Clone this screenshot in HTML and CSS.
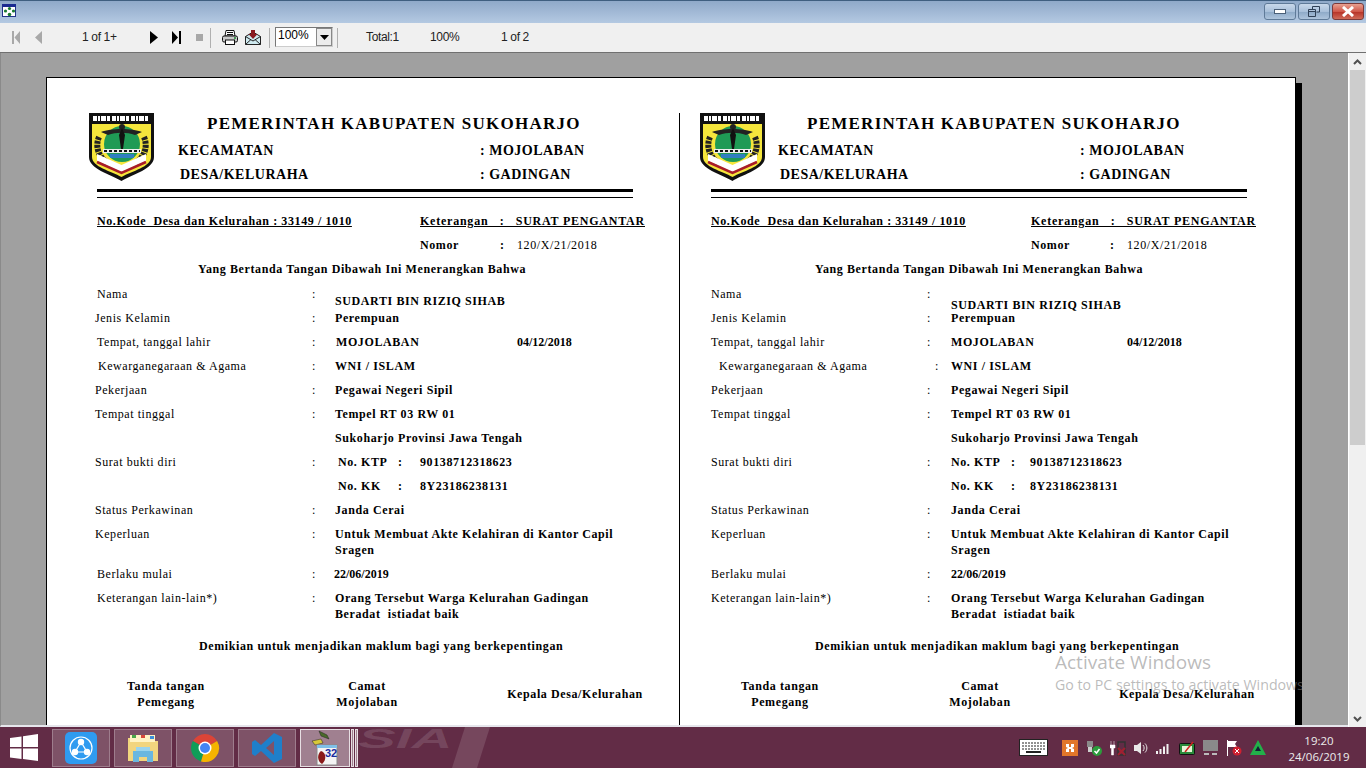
FILE: index.html
```html
<!DOCTYPE html>
<html lang="en">
<head>
    <meta charset="UTF-8">
    <meta name="viewport" content="width=device-width, initial-scale=1.0">
    <title>Surat Pengantar</title>
    <link rel="stylesheet" href="styles.css">
</head>
<body>
    <svg class="defs" width="0" height="0">
        <symbol id="crest" viewBox="0 0 65 68">
            <path d="M0 0H65V44C65 56 44 61 32.5 68C21 61 0 56 0 44Z" fill="#111"/>
            <path d="M3 11H62V44C62 54 43 58 32.5 64C22 58 3 54 3 44Z" fill="#f5e63c"/>
            <path d="M4 5.5H61" stroke="#fff" stroke-width="5" stroke-dasharray="4 1 2 1 5 1 3 2"/>
            <circle cx="33" cy="31" r="18" fill="#1f9a55"/>
            <path d="M10 24C6 33 9 44 19 50M55 24C59 33 56 44 46 50" fill="none" stroke="#222" stroke-width="6" stroke-dasharray="3 1"/>
            <path d="M12 19C22 15 43 15 53 19L46 22C38 19 27 19 19 22Z" fill="#222"/>
            <circle cx="33" cy="14" r="3" fill="#222"/>
            <path d="M33 15L36 22L34 36H32L30 22Z" fill="#111"/>
            <path d="M14 40V36H52V40Z" fill="#eee"/>
            <path d="M15 38H51" stroke="#111" stroke-width="2" stroke-dasharray="3 2"/>
            <path d="M21 41H45V45H21Z" fill="#2f7fc0"/>
            <path d="M8 41L32.5 52L57 41V48L32.5 59L8 48Z" fill="#fff"/>
            <path d="M8 49L32.5 60L57 49" fill="none" stroke="#a81c28" stroke-width="2.5"/>
        </symbol>
    </svg>

    <div class="window">
        <div class="title-bar">
            <svg class="app-icon" width="15" height="15" viewBox="0 0 15 15">
                <rect x="0.5" y="1.5" width="13" height="12" fill="#fff" stroke="#223388"/>
                <rect x="0" y="1" width="14" height="3" fill="#1a2a90"/>
                <circle cx="3.5" cy="8" r="1.6" fill="#1a7a30"/>
                <circle cx="7.5" cy="5.5" r="1.6" fill="#1a7a30"/>
                <circle cx="11.5" cy="8" r="1.6" fill="#1a7a30"/>
                <circle cx="7.5" cy="11.5" r="1.8" fill="#1a7a30"/>
            </svg>
            <div class="win-buttons">
                <div class="win-btn">
                    <svg width="12" height="6" viewBox="0 0 12 6"><rect x="0.5" y="0.5" width="11" height="4" fill="#fff" stroke="#4a5f78"/></svg>
                </div>
                <div class="win-btn">
                    <svg width="12" height="11" viewBox="0 0 12 11"><path d="M4.5 3V0.5H11.5V6H8.5M0.5 3.5H7.5V10.5H0.5ZM0.5 5.5H7.5" fill="none" stroke="#2f4056"/></svg>
                </div>
                <div class="win-btn win-close">
                    <svg width="14" height="11" viewBox="0 0 14 11"><path d="M2 1L12 10M12 1L2 10" stroke="#fff" stroke-width="3"/></svg>
                </div>
            </div>
        </div>

        <div class="toolbar">
            <svg class="tool tool-first" width="8" height="13" viewBox="0 0 8 13"><path d="M0 0H2V13H0ZM8 0V13L2.5 6.5Z" fill="#a8a8a8"/></svg>
            <svg class="tool tool-prev" width="7" height="13" viewBox="0 0 7 13"><path d="M7 0V13L0 6.5Z" fill="#a8a8a8"/></svg>
            <span class="tool-text page-count">1 of 1+</span>
            <svg class="tool tool-next" width="8" height="13" viewBox="0 0 8 13"><path d="M0 0V13L8 6.5Z" fill="#000"/></svg>
            <svg class="tool tool-last" width="9" height="13" viewBox="0 0 9 13"><path d="M0 0V13L6 6.5ZM7 0H9V13H7Z" fill="#000"/></svg>
            <svg class="tool tool-stop" width="7" height="7" viewBox="0 0 7 7"><rect width="7" height="7" fill="#a8a8a8"/></svg>
            <span class="tool-sep sep-one"></span>
            <svg class="tool tool-print" width="16" height="15" viewBox="0 0 16 15">
                <path d="M4 .5H12L13 6H3Z" fill="#fff" stroke="#111"/>
                <path d="M5 2.5H11M5 4.5H11" stroke="#111"/>
                <rect x="0.5" y="6" width="15" height="6" rx="1.5" fill="#c9c9c9" stroke="#111"/>
                <rect x="3.5" y="10" width="9" height="4.5" fill="#fff" stroke="#111"/>
                <circle cx="13" cy="8" r="1" fill="#1a8a30"/>
            </svg>
            <svg class="tool tool-mail" width="16" height="15" viewBox="0 0 16 15">
                <path d="M0.5 6.5L8 2L15.5 6.5V14.5H0.5Z" fill="#cfeaf0" stroke="#222"/>
                <path d="M0.5 6.5L8 11L15.5 6.5M0.5 14.5L6 9.5M15.5 14.5L10 9.5" fill="none" stroke="#222"/>
                <path d="M6 0H10V4H12.5L8 9L3.5 4H6Z" fill="#8a1a20"/>
            </svg>
            <span class="tool-sep sep-two"></span>
            <div class="zoom-box">
                <span class="zoom-value">100%</span>
                <span class="zoom-arrow"><svg width="9" height="5" viewBox="0 0 9 5"><path d="M0 0H9L4.5 5Z" fill="#000"/></svg></span>
            </div>
            <span class="tool-sep sep-three"></span>
            <span class="tool-text total">Total:1</span>
            <span class="tool-text percent">100%</span>
            <span class="tool-text pages">1 of 2</span>
        </div>

        <div class="viewer">
            <div class="canvas">
                <div class="page">
                    <section class="slip slip-left">
                        <header class="head">
                            <svg class="crest" width="65" height="68"><use href="#crest"/></svg>
                            <div class="head-text">
                                <div class="head-title">PEMERINTAH KABUPATEN SUKOHARJO</div>
                                <div class="head-line"><span class="head-key">KECAMATAN</span><span>: MOJOLABAN</span></div>
                                <div class="head-line head-line-two"><span class="head-key">DESA/KELURAHA</span><span>: GADINGAN</span></div>
                            </div>
                        </header>
                        <div class="rule-thick"></div>
                        <div class="rule-thin"></div>

                        <div class="ref-row">
                            <span class="ref-code">No.Kode&nbsp; Desa dan Kelurahan : 33149 / 1010</span>
                            <span class="ref-note">Keterangan &nbsp; : &nbsp; SURAT PENGANTAR</span>
                        </div>
                        <div class="number-row">
                            <span class="number-key">Nomor</span><span class="number-colon">:</span><span class="number-value">120/X/21/2018</span>
                        </div>
                        <div class="lead">Yang Bertanda Tangan Dibawah Ini Menerangkan Bahwa</div>

                        <div class="fields">
                            <div class="row"><span class="lab lab-in">Nama</span><span class="colon">:</span><span class="val val-low">SUDARTI BIN RIZIQ SIHAB</span></div>
                            <div class="row"><span class="lab">Jenis Kelamin</span><span class="colon">:</span><span class="val">Perempuan</span></div>
                            <div class="row"><span class="lab lab-in">Tempat, tanggal lahir</span><span class="colon">:</span><span class="val val-in"><span class="birth-place">MOJOLABAN</span><span class="date">04/12/2018</span></span></div>
                            <div class="row"><span class="lab lab-far">Kewarganegaraan &amp; Agama</span><span class="colon">:</span><span class="val">WNI / ISLAM</span></div>
                            <div class="row"><span class="lab">Pekerjaan</span><span class="colon">:</span><span class="val">Pegawai Negeri Sipil</span></div>
                            <div class="row"><span class="lab">Tempat tinggal</span><span class="colon">:</span><span class="val">Tempel RT 03 RW 01</span></div>
                            <div class="row"><span class="lab"></span><span class="colon"></span><span class="val">Sukoharjo Provinsi Jawa Tengah</span></div>
                            <div class="row"><span class="lab">Surat bukti diri</span><span class="colon">:</span><span class="val val-id"><span class="id-key">No. KTP</span><span class="id-colon">:</span><span>90138712318623</span></span></div>
                            <div class="row"><span class="lab"></span><span class="colon"></span><span class="val val-id"><span class="id-key">No. KK</span><span class="id-colon">:</span><span>8Y23186238131</span></span></div>
                            <div class="row"><span class="lab">Status Perkawinan</span><span class="colon">:</span><span class="val">Janda Cerai</span></div>
                            <div class="row row-tall"><span class="lab">Keperluan</span><span class="colon">:</span><span class="val">Untuk Membuat Akte Kelahiran di Kantor Capil Sragen</span></div>
                            <div class="row"><span class="lab lab-in">Berlaku mulai</span><span class="colon">:</span><span class="val val-out date">22/06/2019</span></div>
                            <div class="row row-tall"><span class="lab lab-in">Keterangan lain-lain*)</span><span class="colon">:</span><span class="val">Orang Tersebut Warga Kelurahan Gadingan<br>Beradat&nbsp; istiadat baik</span></div>
                        </div>

                        <div class="closing">Demikian untuk menjadikan maklum bagi yang berkepentingan</div>
                        <div class="signs">
                            <div>Tanda tangan<br>Pemegang</div>
                            <div>Camat<br>Mojolaban</div>
                            <div class="sign-head">Kepala Desa/Kelurahan</div>
                        </div>
                    </section>

                    <section class="slip slip-right">
                        <header class="head">
                            <svg class="crest" width="65" height="68"><use href="#crest"/></svg>
                            <div class="head-text">
                                <div class="head-title">PEMERINTAH KABUPATEN SUKOHARJO</div>
                                <div class="head-line"><span class="head-key">KECAMATAN</span><span>: MOJOLABAN</span></div>
                                <div class="head-line head-line-two"><span class="head-key">DESA/KELURAHA</span><span>: GADINGAN</span></div>
                            </div>
                        </header>
                        <div class="rule-thick"></div>
                        <div class="rule-thin"></div>

                        <div class="ref-row">
                            <span class="ref-code">No.Kode&nbsp; Desa dan Kelurahan : 33149 / 1010</span>
                            <span class="ref-note">Keterangan &nbsp; : &nbsp; SURAT PENGANTAR</span>
                        </div>
                        <div class="number-row">
                            <span class="number-key">Nomor</span><span class="number-colon">:</span><span class="number-value">120/X/21/2018</span>
                        </div>
                        <div class="lead">Yang Bertanda Tangan Dibawah Ini Menerangkan Bahwa</div>

                        <div class="fields">
                            <div class="row"><span class="lab">Nama</span><span class="colon">:</span><span class="val val-low">SUDARTI BIN RIZIQ SIHAB</span></div>
                            <div class="row"><span class="lab">Jenis Kelamin</span><span class="colon">:</span><span class="val">Perempuan</span></div>
                            <div class="row"><span class="lab">Tempat, tanggal lahir</span><span class="colon">:</span><span class="val"><span class="birth-place">MOJOLABAN</span><span class="date">04/12/2018</span></span></div>
                            <div class="row"><span class="lab lab-far">Kewarganegaraan &amp; Agama</span><span class="colon colon-far">:</span><span class="val">WNI / ISLAM</span></div>
                            <div class="row"><span class="lab">Pekerjaan</span><span class="colon">:</span><span class="val">Pegawai Negeri Sipil</span></div>
                            <div class="row"><span class="lab">Tempat tinggal</span><span class="colon">:</span><span class="val">Tempel RT 03 RW 01</span></div>
                            <div class="row"><span class="lab"></span><span class="colon"></span><span class="val">Sukoharjo Provinsi Jawa Tengah</span></div>
                            <div class="row"><span class="lab">Surat bukti diri</span><span class="colon">:</span><span class="val val-id"><span class="id-key">No. KTP</span><span class="id-colon">:</span><span>90138712318623</span></span></div>
                            <div class="row"><span class="lab"></span><span class="colon"></span><span class="val val-id"><span class="id-key">No. KK</span><span class="id-colon">:</span><span>8Y23186238131</span></span></div>
                            <div class="row"><span class="lab">Status Perkawinan</span><span class="colon">:</span><span class="val">Janda Cerai</span></div>
                            <div class="row row-tall"><span class="lab">Keperluan</span><span class="colon">:</span><span class="val">Untuk Membuat Akte Kelahiran di Kantor Capil Sragen</span></div>
                            <div class="row"><span class="lab">Berlaku mulai</span><span class="colon">:</span><span class="val date">22/06/2019</span></div>
                            <div class="row row-tall"><span class="lab">Keterangan lain-lain*)</span><span class="colon">:</span><span class="val">Orang Tersebut Warga Kelurahan Gadingan<br>Beradat&nbsp; istiadat baik</span></div>
                        </div>

                        <div class="closing">Demikian untuk menjadikan maklum bagi yang berkepentingan</div>
                        <div class="signs">
                            <div>Tanda tangan<br>Pemegang</div>
                            <div>Camat<br>Mojolaban</div>
                            <div class="sign-head">Kepala Desa/Kelurahan</div>
                        </div>
                    </section>
                </div>
                <div class="watermark">
                    <div class="watermark-title">Activate Windows</div>
                    <div class="watermark-text">Go to PC settings to activate Windows.</div>
                </div>
            </div>
            <div class="scrollbar">
                <span class="scroll-btn"><svg width="9" height="6" viewBox="0 0 9 6"><path d="M1 5L4.5 1.5L8 5" fill="none" stroke="#505050" stroke-width="2"/></svg></span>
                <span class="scroll-thumb"></span>
                <span class="scroll-rest"></span>
                <span class="scroll-btn"><svg width="9" height="6" viewBox="0 0 9 6"><path d="M1 1L4.5 4.5L8 1" fill="none" stroke="#505050" stroke-width="2"/></svg></span>
            </div>
        </div>

        <footer class="taskbar">
            <svg class="wallpaper" width="150" height="41" viewBox="0 0 150 41">
                <text transform="translate(6 21) scale(2.1 1)" class="wallpaper-text">SIA</text>
                <path d="M113 0H138L125 41H100Z" fill="#fff" opacity="0.13"/>
            </svg>
            <svg class="start" width="28" height="27" viewBox="0 0 28 27">
                <path d="M0 4L11.5 2.4V13H0ZM13 2.2L28 0V13H13ZM0 14.5H11.5V25L0 23.5ZM13 14.5H28V27L13 25Z" fill="#fff"/>
            </svg>
            <div class="task-btn">
                <svg width="32" height="32" viewBox="0 0 32 32">
                    <rect width="32" height="32" rx="5" fill="#2f9bf0"/>
                    <circle cx="16" cy="16" r="11" fill="none" stroke="#fff" stroke-width="1.2"/>
                    <circle cx="16" cy="10" r="3.2" fill="#fff"/>
                    <circle cx="10" cy="20" r="3.2" fill="#fff"/>
                    <circle cx="22" cy="20" r="3.2" fill="#fff"/>
                    <path d="M16 10L10 20H22Z" fill="none" stroke="#fff" stroke-width="1.2"/>
                </svg>
            </div>
            <div class="task-btn">
                <svg width="32" height="30" viewBox="0 0 32 30">
                    <path d="M1 5H12L14 8H31V28H1Z" fill="#f2d57e"/>
                    <path d="M3 2H28V9H3Z" fill="#fff3c4"/>
                    <path d="M5 2H9V5H5Z" fill="#4aa84a"/>
                    <path d="M14 2H18V5H14Z" fill="#d9483b"/>
                    <path d="M23 3H27V6H23Z" fill="#3c8fd9"/>
                    <path d="M6 18H26V29H20V24H12V29H6Z" fill="#6ab7e0"/>
                    <path d="M9 14H23V18H9Z" fill="#9ad4ee"/>
                </svg>
            </div>
            <div class="task-btn">
                <svg width="30" height="30" viewBox="0 0 30 30">
                    <path d="M15 15L2.9 8A14 14 0 0 1 27.1 8Z" fill="#db4437"/>
                    <path d="M15 15L2.9 8A14 14 0 0 0 11 28.4Z" fill="#0f9d58"/>
                    <path d="M15 15L27.1 8A14 14 0 0 1 11 28.4Z" fill="#f4b400"/>
                    <circle cx="15" cy="15" r="6.5" fill="#fff"/>
                    <circle cx="15" cy="15" r="5" fill="#4285f4"/>
                </svg>
            </div>
            <div class="task-btn">
                <svg width="32" height="32" viewBox="0 0 32 32">
                    <path d="M23 1L31 5V27L23 31L10 19L4 24L1 22V10L4 8L10 13ZM23 9L15 16L23 23Z" fill="#1f7fca"/>
                </svg>
            </div>
            <div class="task-btn task-active">
                <svg width="30" height="36" viewBox="0 0 30 36">
                    <path d="M9 1L17 5L19 9L11 6Z" fill="#4a6a2a" stroke="#222" stroke-width="0.5"/>
                    <path d="M2 11L11 9L13 13L5 15Z" fill="#d8c838" stroke="#222" stroke-width="0.5"/>
                    <rect x="7" y="15" width="20" height="20" fill="#f4f4f4" stroke="#888"/>
                    <rect x="7" y="15" width="20" height="3" fill="#7fc0e8"/>
                    <path d="M11 21C16 22 17 30 12 34C7 31 7 24 11 21Z" fill="#8a1a1a"/>
                    <text x="15" y="27" class="app-number">32</text>
                </svg>
            </div>
            <span class="task-stack"></span>
            <span class="task-stack task-stack-b"></span>

            <div class="tray">
                <svg class="tray-key" width="29" height="17" viewBox="0 0 29 17">
                    <rect x="0.5" y="0.5" width="28" height="16" fill="#fff" stroke="#222"/>
                    <path d="M3 4H26M3 7H26M3 10H26" stroke="#222" stroke-dasharray="2 1"/>
                    <path d="M7 13H22" stroke="#222" stroke-width="2"/>
                </svg>
                <svg class="tray-icon tray-xampp" width="16" height="16" viewBox="0 0 16 16">
                    <rect width="16" height="16" fill="#e2762a"/>
                    <path d="M4 4H7V7H9V4H12V7L10 8L12 9V12H9V9H7V12H4V9L6 8L4 7Z" fill="#fff"/>
                </svg>
                <svg class="tray-icon" width="16" height="16" viewBox="0 0 16 16">
                    <rect x="1" y="1" width="6" height="6" fill="#8a8a8a"/>
                    <rect x="2" y="7" width="4" height="5" fill="#cfcfcf"/>
                    <circle cx="11" cy="11" r="5" fill="#2c9c3c"/>
                    <path d="M8.5 11L10.5 13L13.5 9" fill="none" stroke="#fff" stroke-width="1.5"/>
                </svg>
                <svg class="tray-icon" width="16" height="16" viewBox="0 0 16 16">
                    <path d="M1 1V5M4 1V5M0 5H5V8H3.5V15H1.5V8H0Z" fill="#fff" stroke="#fff" stroke-width="0.5"/>
                    <rect x="8" y="2" width="7" height="13" fill="none" stroke="#333" stroke-width="1.5"/>
                    <path d="M8 8L15 15M15 8L8 15" stroke="#a02030" stroke-width="2"/>
                </svg>
                <svg class="tray-icon" width="14" height="14" viewBox="0 0 14 14">
                    <path d="M0 4H3L7 1V13L3 10H0Z" fill="#e8e8e8"/>
                    <path d="M9 4C10.5 6 10.5 8 9 10M11 2.5C13.5 5 13.5 9 11 11.5" fill="none" stroke="#e8e8e8"/>
                </svg>
                <svg class="tray-icon" width="15" height="13" viewBox="0 0 15 13">
                    <path d="M0 10H2V13H0ZM3.5 8H5.5V13H3.5ZM7 5.5H9V13H7ZM10.5 3H12.5V13H10.5Z" fill="#f0f0f0"/>
                </svg>
                <svg class="tray-icon" width="16" height="14" viewBox="0 0 16 14">
                    <rect x="0.5" y="2.5" width="15" height="11" rx="1" fill="#2a8a3a" stroke="#111"/>
                    <rect x="3" y="5" width="10" height="6" fill="#e8f4d8"/>
                    <path d="M6 11L14 1" stroke="#d02020" stroke-width="1.5"/>
                </svg>
                <svg class="tray-icon" width="15" height="16" viewBox="0 0 15 16">
                    <rect x="0" y="0" width="15" height="11" fill="#8a8a8a"/>
                    <rect x="1" y="13" width="5" height="2" fill="#bbb"/>
                    <rect x="9" y="13" width="5" height="2" fill="#bbb"/>
                </svg>
                <svg class="tray-icon" width="16" height="16" viewBox="0 0 16 16">
                    <path d="M1 0H2V16H1ZM2 1H11L9 4L11 7H2Z" fill="#fff"/>
                    <circle cx="11" cy="11" r="4.5" fill="#d02030"/>
                    <path d="M9 9L13 13M13 9L9 13" stroke="#fff"/>
                </svg>
                <svg class="tray-icon" width="16" height="15" viewBox="0 0 16 15">
                    <path d="M8 0L16 15H0Z" fill="#22b04a"/>
                    <path d="M8 6L11 11H5Z" fill="#123"/>
                </svg>
                <div class="clock">
                    <div>19:20</div>
                    <div>24/06/2019</div>
                </div>
            </div>
        </footer>
    </div>
</body>
</html>
```

FILE: styles.css
```css
* {
    box-sizing: border-box;
}

html,
body {
    margin: 0;
    height: 100%;
    overflow: hidden;
}

body {
    font-family: "Liberation Sans", Arial, sans-serif;
    font-size: 12px;
    color: #000;
}

.defs {
    position: absolute;
}

.window {
    display: flex;
    flex-direction: column;
    height: 768px;
}

/* title bar */
.title-bar {
    height: 23px;
    flex: none;
    display: flex;
    align-items: flex-start;
    justify-content: space-between;
    padding: 3px 2px 0 2px;
    border-top: 1px solid #3f5f80;
    background: linear-gradient(180deg, #8fa9c9, #b4c9e2);
}

.app-icon {
    margin-top: -1px;
}

.win-buttons {
    display: flex;
    gap: 2px;
    margin-top: -1px;
}

.win-btn {
    width: 32px;
    height: 17px;
    display: flex;
    align-items: center;
    justify-content: center;
    border: 1px solid #5f7a98;
    border-radius: 3px;
    background: linear-gradient(180deg, #c8d8ea 0%, #a9c0da 50%, #8fabc9 55%, #aec4dc 100%);
}

.win-close {
    border-color: #7a3a3a;
    background: linear-gradient(180deg, #e8a090 0%, #d0584a 50%, #b8352a 55%, #cf6a58 100%);
}

/* toolbar */
.toolbar {
    height: 29px;
    flex: none;
    display: flex;
    align-items: center;
    background: #f0f0f0;
}

.tool {
    flex: none;
}

.tool-first { margin-left: 12px; }
.tool-prev { margin-left: 15px; }
.tool-next { margin-left: 0; }
.tool-last { margin-left: 14px; }
.tool-stop { margin-left: 15px; }
.tool-print { margin-left: 11px; }
.tool-mail { margin-left: 7px; }

.tool-text {
    flex: none;
    color: #222;
    letter-spacing: -0.35px;
    margin-top: -1px;
}

.page-count {
    width: 68px;
    margin-left: 40px;
}

.tool-sep {
    flex: none;
    width: 1px;
    height: 20px;
    background: #b0b0b0;
}

.sep-one { margin-left: 7px; }
.sep-two { margin-left: 8px; }
.sep-three { margin-left: 4px; }

.zoom-box {
    width: 58px;
    height: 20px;
    margin-left: 5px;
    margin-top: -1px;
    display: flex;
    justify-content: space-between;
    border: 1px solid #777;
    border-right-color: #ccc;
    border-bottom-color: #ccc;
    background: #fff;
}

.zoom-value {
    padding-left: 2px;
    line-height: 15px;
}

.zoom-arrow {
    width: 16px;
    display: flex;
    align-items: center;
    justify-content: center;
    border: 1px solid #888;
    background: #ececec;
}

.total { margin-left: 28px; width: 64px; }
.percent { width: 71px; }

/* viewer */
.viewer {
    flex: 1;
    min-height: 0;
    display: flex;
    border-top: 1px solid #707070;
    background: #a0a0a0;
}

.canvas {
    flex: 1;
    position: relative;
    overflow: hidden;
    padding: 24px 0 0 45px;
    border-left: 1px solid #8a8a8a;
    border-bottom: 2px solid #e6e6ec;
}

.page {
    width: 1250px;
    height: 900px;
    display: flex;
    padding-top: 35px;
    border: 1px solid #000;
    background: #fff;
    box-shadow: 6px 6px 0 #000;
    font-family: "Liberation Serif", "Times New Roman", serif;
    font-size: 12px;
    line-height: 16px;
    font-weight: bold;
    letter-spacing: 0.6px;
}

.slip {
    flex: none;
}

.slip-left {
    width: 633px;
    padding-left: 50px;
    border-right: 1px solid #000;
    --crest-shift: -8px;
    --head-gap: 24px;
    --row-shift: -2px;
    --col-lab: 217px;
    --col-colon: 23px;
    --ref-width: 323px;
    --num-key: 80px;
    --lead-x: 101px;
    --closing-x: 102px;
    --birth: 181px;
    --id-key: 60px;
    --id-colon: 22px;
    --id-shift: 3px;
    --far: 3px;
    --low: 7px;
    --signs: 138px 264px 152px;
}

.slip-right {
    width: 615px;
    padding-left: 31px;
    --crest-shift: -11px;
    --head-gap: 13px;
    --row-shift: 0px;
    --col-lab: 216px;
    --col-colon: 24px;
    --ref-width: 320px;
    --num-key: 79px;
    --lead-x: 104px;
    --closing-x: 104px;
    --birth: 176px;
    --id-key: 60px;
    --id-colon: 19px;
    --id-shift: 0px;
    --far: 8px;
    --low: 11px;
    --signs: 138px 262px 152px;
}

/* letterhead */
.head {
    display: flex;
    height: 76px;
    margin-left: var(--crest-shift);
}

.crest {
    flex: none;
    margin-right: var(--head-gap);
}

.head-title {
    margin: 1px 0 0 29px;
    font-size: 17px;
    line-height: 20px;
    letter-spacing: 1.25px;
    white-space: nowrap;
}

.head-line {
    display: flex;
    margin-top: 8px;
    font-size: 14px;
    line-height: 16px;
    letter-spacing: 0.5px;
}

.head-title + .head-line {
    margin-top: 9px;
}

.head-line-two {
    margin-left: 2px;
}

.head-key {
    width: 302px;
}

.head-line-two .head-key {
    width: 300px;
}

.rule-thick {
    width: 536px;
    height: 3px;
    background: #000;
}

.rule-thin {
    width: 536px;
    height: 1px;
    margin-top: 5px;
    background: #000;
}

/* reference lines */
.ref-row {
    display: flex;
    height: 24px;
    margin-top: 15px;
    text-decoration: underline;
    white-space: nowrap;
}

.ref-code {
    width: var(--ref-width);
}

.ref-note {
    letter-spacing: 0.77px;
}

.number-row {
    display: flex;
    height: 24px;
    margin-left: var(--ref-width);
}

.number-key {
    width: var(--num-key);
}

.number-colon {
    width: 17px;
}

.number-value {
    font-weight: normal;
}

.lead {
    height: 25px;
    margin-left: var(--lead-x);
    white-space: nowrap;
}

/* form rows */
.fields {
    margin-left: var(--row-shift);
}

.row {
    display: grid;
    grid-template-columns: var(--col-lab) var(--col-colon) 305px;
    height: 24px;
}

.row-tall {
    height: 40px;
}

.lab {
    font-weight: normal;
    letter-spacing: 0.55px;
}

.lab-in { padding-left: 2px; }
.lab-far { padding-left: var(--far); }

.colon {
    font-weight: normal;
}

.colon-far {
    padding-left: 8px;
}

.val-low {
    margin-top: var(--low);
}

.val-in {
    padding-left: 1px;
}

.val-out {
    margin-left: -1px;
}

.date {
    letter-spacing: 0;
}

.birth-place {
    display: inline-block;
    width: var(--birth);
}

.val-id {
    display: flex;
    padding-left: var(--id-shift);
}

.id-key {
    width: var(--id-key);
}

.id-colon {
    width: var(--id-colon);
}

/* bottom of the slip */
.closing {
    margin: 8px 0 24px var(--closing-x);
    white-space: nowrap;
}

.signs {
    display: grid;
    grid-template-columns: var(--signs);
    text-align: center;
    white-space: nowrap;
}

.sign-head {
    padding-top: 8px;
}

.watermark {
    position: absolute;
    left: 1054px;
    top: 596px;
    width: 247px;
    overflow: hidden;
    color: rgba(130, 130, 130, 0.55);
    font-family: "Open Sans", sans-serif;
    white-space: nowrap;
}

.watermark-title {
    font-size: 19px;
    line-height: 26px;
}

.watermark-text {
    font-size: 14.2px;
    line-height: 20px;
}

/* scrollbar */
.scrollbar {
    width: 18px;
    flex: none;
    display: flex;
    flex-direction: column;
    border-left: 1px solid #fff;
    background: #f0f0f0;
}

.scroll-btn {
    height: 17px;
    flex: none;
    display: flex;
    align-items: center;
    justify-content: center;
}

.scroll-thumb {
    height: 375px;
    flex: none;
    margin: 0 1px;
    background: #cdcdcd;
}

.scroll-rest {
    flex: 1;
}

/* taskbar */
.taskbar {
    height: 41px;
    flex: none;
    position: relative;
    display: flex;
    align-items: center;
    overflow: hidden;
    background: #622c46;
}

.wallpaper {
    position: absolute;
    left: 352px;
    top: 0;
}

.wallpaper-text {
    font-family: "Liberation Sans", sans-serif;
    font-size: 27px;
    font-weight: bold;
    font-style: italic;
    fill: #fff;
    fill-opacity: 0.13;
}

.start {
    flex: none;
    margin: 0 14px 0 10px;
    position: relative;
}

.task-btn {
    width: 58px;
    height: 38px;
    flex: none;
    position: relative;
    display: flex;
    align-items: center;
    justify-content: center;
    margin-right: 4px;
    border: 1px solid rgba(255, 255, 255, 0.25);
    background: rgba(255, 255, 255, 0.18);
}

.task-active {
    width: 50px;
    margin-right: 1px;
    border-color: rgba(255, 255, 255, 0.75);
    background: rgba(255, 255, 255, 0.4);
}

.task-stack {
    width: 3px;
    height: 38px;
    flex: none;
    border: 1px solid rgba(255, 255, 255, 0.75);
    background: rgba(255, 255, 255, 0.4);
}

.task-stack-b {
    margin-left: 1px;
}

.app-number {
    font-family: "Liberation Sans", sans-serif;
    font-size: 11px;
    font-weight: bold;
    fill: #1a2aa0;
}

.tray {
    position: relative;
    margin-left: auto;
    display: flex;
    align-items: center;
    padding-right: 11px;
}

.tray-key {
    margin-right: 14px;
}

.tray-icon {
    flex: none;
    margin-right: 8px;
}

.clock {
    width: 72px;
    margin-left: 9px;
    padding-top: 2px;
    font-family: "Open Sans", sans-serif;
    font-size: 11.5px;
    line-height: 16px;
    text-align: center;
    color: #ececec;
}
```
